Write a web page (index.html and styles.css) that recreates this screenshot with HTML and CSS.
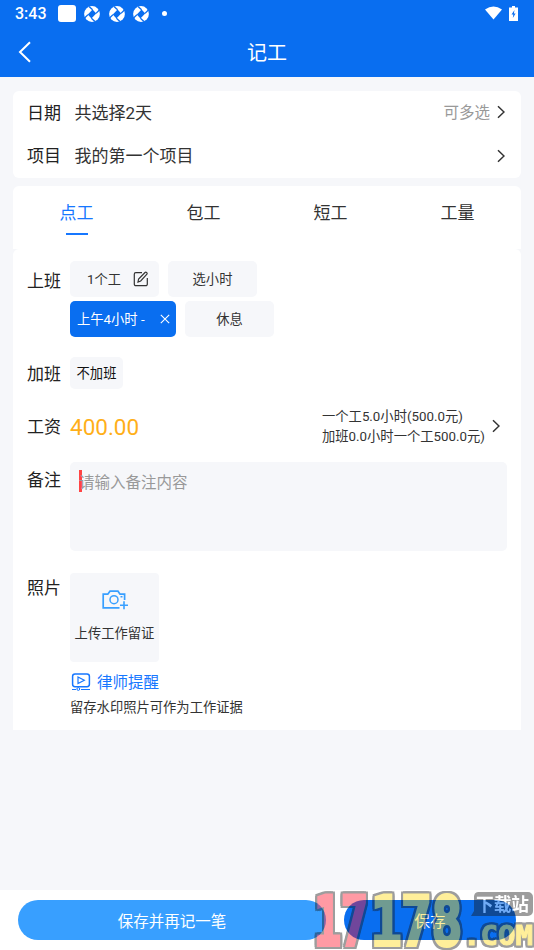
FILE: index.html
```html
<!DOCTYPE html>
<html lang="zh-CN">
<head>
<meta charset="utf-8">
<title>记工</title>
<link rel="stylesheet" href="styles.css">
</head>
<body>
<svg class="defs" width="0" height="0">
  <symbol id="chev" viewBox="0 0 8 14"><path d="M1 1.2 7 7 1 12.8" fill="none" stroke="currentColor" stroke-width="1.5"/></symbol>
  <symbol id="swirl" viewBox="0 0 16 16"><circle cx="8" cy="8" r="7.9" fill="#fff"/><path d="m8.6 3.6 3.6 3.8-4.8 5L3.8 8.6z" fill="#096ef0"/><g fill="none" stroke="#096ef0" stroke-width="1.3"><path d="M8.6 3.8 5 .5"/><path d="M12 7.4 15.4 4"/><path d="M7.4 12.2 11 15.5"/><path d="M4 8.6.6 12"/></g></symbol>
</svg>
<header class="top">
  <div class="status">
    <span class="clock">3:43</span><i class="sq"></i>
    <svg class="sw"><use href="#swirl"/></svg><svg class="sw"><use href="#swirl"/></svg><svg class="sw"><use href="#swirl"/></svg>
    <i class="dot"></i>
    <svg class="wifi" viewBox="0 0 18 14"><path d="M0 3.2Q9-3 18 3.2L9 14z" fill="#fff"/></svg>
    <svg class="batt" viewBox="0 0 9 15"><path d="M3 0h3v1.5h3V15H0V1.5h3z" fill="#fff"/><path d="M5.5 4 2.5 8.5h1.8L3.8 12l2.8-4.6H4.9z" fill="#096ef0"/></svg>
  </div>
  <div class="nav">
    <svg class="back" viewBox="0 0 13 22"><path d="M12 1.2 2 11l10 9.8" fill="none" stroke="#fff" stroke-width="2"/></svg>
    <h1>记工</h1>
  </div>
</header>
<main>
  <section class="card info">
    <div class="line"><span class="label">日期</span><span class="val">共选择2天</span><span class="hint">可多选</span><svg class="chev"><use href="#chev"/></svg></div>
    <div class="line"><span class="label">项目</span><span class="val">我的第一个项目</span><svg class="chev"><use href="#chev"/></svg></div>
  </section>
  <nav class="card tabs"><span class="on">点工</span><span>包工</span><span>短工</span><span>工量</span></nav>
  <section class="card form">
    <div class="row work"><span class="label">上班</span>
      <div class="chips">
        <span class="chip edit">1个工<svg viewBox="0 0 16 16"><path d="M9 1.7H2.8a1.5 1.5 0 0 0-1.5 1.5v10a1.5 1.5 0 0 0 1.5 1.5h10a1.5 1.5 0 0 0 1.5-1.5V7M5 11l.6-3L12 1.5q.8-.7 1.7.1t0 1.7L7.7 10z" fill="none" stroke="#333" stroke-width="1.2"/></svg></span>
        <span class="chip">选小时</span>
        <span class="chip active">上午4小时 -<svg viewBox="0 0 10 10"><path d="m.8.8 8.4 8.4m0-8.4L.8 9.2" stroke="#fff" stroke-width="1.1"/></svg></span>
        <span class="chip">休息</span>
      </div>
    </div>
    <div class="row over"><span class="label">加班</span><span class="none">不加班</span></div>
    <div class="row wage"><span class="label">工资</span><span class="money">400.00</span><p>一个工5.0小时(500.0元)<br>加班0.0小时一个工500.0元)</p><svg class="chev"><use href="#chev"/></svg></div>
    <div class="row note"><span class="label">备注</span><div class="area"><i class="caret"></i><span>请输入备注内容</span></div></div>
    <div class="row photo"><span class="label">照片</span>
      <div>
        <div class="upload"><svg viewBox="0 0 26 20"><path d="M17.5 17.8H1.2V4.2h4.6L8 1.2h8l2 3h4.6V10" fill="none" stroke="#389fff" stroke-width="1.7"/><circle cx="12" cy="9.7" r="4" fill="none" stroke="#389fff" stroke-width="1.5"/><path d="M18.5 6.8h2M22 11.3v8M18 15.3h8" stroke="#389fff" stroke-width="1.6"/></svg><span>上传工作留证</span></div>
        <div class="law"><svg viewBox="0 0 20 18"><rect x="1.6" y=".9" width="16.8" height="12.8" rx="2.4" fill="none" stroke="#1677ff" stroke-width="1.5"/><path d="m7 4 6.3 3.3L7 10.6z" fill="none" stroke="#1677ff" stroke-width="1.2"/><path d="M1 16.5h4m5 0h9" stroke="#1677ff"/><circle cx="7.3" cy="16" r="1.4" fill="none" stroke="#1677ff"/></svg>律师提醒</div>
        <p class="tip">留存水印照片可作为工作证据</p>
      </div>
    </div>
  </section>
</main>
<footer><button class="again">保存并再记一笔</button><button class="save">保存</button></footer>
<svg class="mark" viewBox="0 0 226 62">
  <g class="outlined big"><text x="6" y="57" textLength="54" lengthAdjust="spacingAndGlyphs" class="red">17</text><text x="63" y="57" textLength="91" lengthAdjust="spacingAndGlyphs" class="yel">178</text></g>
  <path d="M170 4h50a5 5 0 0 1 5 5v14a5 5 0 0 1-5 5h-57l3-5V9a5 5 0 0 1 4-5z" fill="#181818"/>
  <text x="168" y="23" textLength="53" lengthAdjust="spacingAndGlyphs" class="site">下载站</text>
  <g class="outlined com"><text x="155" y="57" textLength="70" lengthAdjust="spacingAndGlyphs" class="yel">.COM</text></g>
</svg>
</body>
</html>
```
FILE: styles.css
```css
* { box-sizing: border-box; }
body { margin: 0; height: 950px; display: flex; flex-direction: column; position: relative; overflow: hidden; background: #f6f7fa; color: #333; font: 400 17px/24px Roboto, "Noto Sans CJK SC", sans-serif; }
h1, p { margin: 0; font-weight: inherit; }
svg, i { display: block; flex: none; }
.defs { position: absolute; }
.top { height: 77px; background: #096ef0; color: #fff; }
.status { height: 27px; display: flex; align-items: center; padding: 0 15px; }
.clock { font-size: 16px; font-weight: 500; width: 43px; padding-top: 1px; }
.sq { width: 18px; height: 17px; border-radius: 3px; background: #fff; margin-right: 8px; }
.sw { width: 16px; height: 16px; margin-right: 8.5px; }
.dot { width: 5px; height: 5px; border-radius: 50%; background: #fff; margin-left: 4px; }
.wifi { width: 17px; height: 14px; margin-left: auto; margin-top: -1px; }
.batt { width: 9px; height: 15px; margin: -1px 1px 0 7px; }
.nav { height: 50px; display: flex; align-items: center; padding-left: 18px; }
.back { width: 13px; height: 22px; }
h1 { flex: 1; text-align: center; font-size: 20px; padding: 1px 31px 0 0; }
main { padding: 14px 13px 0; flex: 1; }
.card { background: #fff; border-radius: 6px; }
.info { height: 87px; }
.line { height: 43.5px; display: flex; align-items: center; padding: 0 16px 0 14px; }
.label { width: 43px; flex: none; color: #222; }
.line .label { width: 47.5px; }
.hint { font-size: 15.5px; color: #999; margin-left: auto; margin-right: 7px; padding-top: 1px; }
.chev { width: 8px; height: 14px; color: #333; }
.line .chev { margin-top: -1px; }
.val + .chev { margin-left: auto; }
.tabs { height: 63px; margin-top: 8px; display: flex; border-radius: 6px 6px 0 0; }
.tabs span { flex: 1; text-align: center; padding-top: 15px; }
.tabs .on { color: #1677ff; }
.on::after { content: ""; display: block; width: 22px; height: 2px; background: #1677ff; margin: 8px auto 0; }
.form { height: 481px; padding: 12px 14px 0 14px; border-radius: 6px 6px 0 0; }
.row { display: flex; }
.chips { display: flex; flex-wrap: wrap; width: 230px; gap: 4px 9px; }
.chip { width: 89px; height: 36px; border-radius: 5px; background: #f6f7fa; display: flex; align-items: center; justify-content: center; font-size: 13.3px; padding-top: 1px; }
.edit svg { width: 16px; height: 16px; margin: -2px 0 0 12px; }
.edit { padding-left: 7px; }
.active { width: 106px; background: #096ef0; color: #fff; justify-content: space-between; padding: 1px 6px 0 7px; }
.active svg { width: 10px; height: 10px; margin-top: -1px; }
.work .label { padding-top: 8px; }
.over { margin-top: 20px; height: 32px; align-items: center; }
.over .label, .wage .label, .money, .wage p { padding-top: 2px; }
.none { width: 53px; height: 32px; padding-top: 1px; line-height: 32px; border-radius: 5px; background: #f6f7fa; text-align: center; font-size: 13.3px; color: #111; }
.wage { height: 40px; margin-top: 17px; align-items: center; }
.money { font-size: 22.5px; color: #ffaf19; }
.wage p { font-size: 13.3px; line-height: 20px; margin-left: auto; width: 170px; white-space: nowrap; }
.wage .chev { margin-right: 7px; }
.note { margin-top: 16px; height: 89px; }
.note .label { padding-top: 6px; }
.area { flex: 1; background: #f6f7fa; border-radius: 5px; padding: 8px 9px; display: flex; color: #999; font-size: 15.5px; }
.area span { padding-top: 1px; }
.caret { width: 2.5px; height: 22px; background: #ff4444; margin-right: -2.5px; }
.photo { margin-top: 22px; }
.photo .label { padding-top: 3px; }
.upload { width: 89px; height: 89px; border-radius: 4px; background: #f6f7fa; display: flex; flex-direction: column; align-items: center; padding-top: 17px; font-size: 13.3px; }
.upload svg { width: 26px; height: 20px; margin-bottom: 12px; }
.law { display: flex; align-items: center; color: #1677ff; font-size: 15.5px; margin-top: 9px; }
.law svg { width: 20px; height: 18px; margin: -2px 6px 0 1px; }
.tip { font-size: 13.3px; margin-top: 1px; }
footer { height: 60px; background: #fff; display: flex; gap: 18px; padding: 10px 18px; }
button { border: 0; padding: 3px 0 0; height: 40px; border-radius: 20px; color: #fff; font: inherit; font-size: 15.5px; }
.again { width: 308px; background: #389fff; }
.save { width: 172px; background: #096ef0; }
.mark { position: absolute; left: 308px; top: 888px; width: 226px; height: 62px; opacity: .42; }
.outlined { filter: drop-shadow(2px 0 0 #181818) drop-shadow(-2px 0 0 #181818) drop-shadow(0 2px 0 #181818) drop-shadow(0 -2px 0 #181818); }
.big { font: bold 68px "DejaVu Sans Mono", monospace; stroke-width: 4px; }
.red { fill: #ff1128; stroke: #ff1128; }
.yel { fill: #ffdb11; stroke: #ffdb11; }
.com { font: bold 27px "DejaVu Sans Mono", monospace; stroke-width: 1px; }
.site { font: bold 18px "Noto Sans CJK SC", sans-serif; fill: #fff; }
```
